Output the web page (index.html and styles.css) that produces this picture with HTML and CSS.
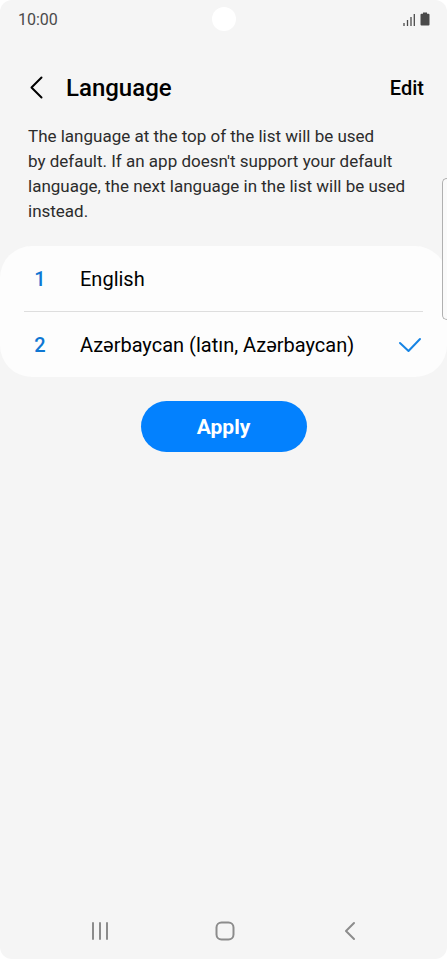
FILE: index.html
```html
<!DOCTYPE html>
<html lang="en">
<head>
<meta charset="utf-8">
<meta name="viewport" content="width=device-width, initial-scale=1">
<title>Language</title>
<link rel="stylesheet" href="styles.css">
</head>
<body>
<div class="screen">
  <div class="status">
    <time class="clock">10:00</time>
    <span class="camera"></span>
    <span class="status-icons">
      <svg width="12" height="13" viewBox="0 0 12 13" aria-hidden="true"><path d="M1 10v3M4.500 7v6M8 4v9M11.300 1v12"/></svg>
      <svg width="10" height="14" viewBox="0 0 10 14" aria-hidden="true"><path class="solid" d="M3 .5h4v1.300h1.500q1 0 1 1v9.700q0 1-1 1h-7q-1 0-1-1V2.800q0-1 1-1H3z"/></svg>
    </span>
  </div>
  <header class="header">
    <button class="back" type="button" aria-label="Navigate up">
      <svg width="14" height="24" viewBox="0 0 14 24" aria-hidden="true"><path d="M12.500 1.500 2.500 11.500l10 10"/></svg>
    </button>
    <h1 class="title">Language</h1>
    <button class="edit" type="button">Edit</button>
  </header>
  <main class="content">
    <p class="note">The language at the top of the list will be used by&nbsp;default. If an app doesn't support your default language, the next language in the list will be used instead.</p>
    <ol class="languages">
      <li class="item"><button class="language" type="button"><span class="rank">1</span><span class="name">English</span></button></li>
      <li class="item"><button class="language" type="button" aria-pressed="true"><span class="rank">2</span><span class="name" lang="az">Azərbaycan (latın, Azərbaycan)</span>
        <svg class="check" width="24" height="16" viewBox="0 0 24 16" aria-hidden="true"><path d="m2 6 8.500 8L22 2"/></svg></button></li>
    </ol>
    <button class="apply" type="button">Apply</button>
  </main>
  <nav class="nav">
    <button class="nav-button" type="button" aria-label="Recents"><svg width="20" height="20" viewBox="0 0 20 20" aria-hidden="true"><path d="M3 2v16M10 2v16M17 2v16"/></svg></button>
    <button class="nav-button" type="button" aria-label="Home"><svg width="20" height="20" viewBox="0 0 20 20" aria-hidden="true"><rect x="1.500" y="1.500" width="17" height="17" rx="5"/></svg></button>
    <button class="nav-button" type="button" aria-label="Back"><svg width="20" height="20" viewBox="0 0 20 20" aria-hidden="true"><path d="M14 2 6 10l8 8"/></svg></button>
  </nav>
  <div class="edge-handle"></div>
</div>
</body>
</html>
```
FILE: styles.css
```css
* {
  box-sizing: border-box;
}

body {
  margin: 0;
  background: #fff;
  color: #000;
  font-family: Roboto, "Liberation Sans", sans-serif;
}

button {
  margin: 0;
  padding: 0;
  border: 0;
  background: none;
  color: inherit;
  font: inherit;
}

svg {
  display: block;
  flex: none;
  fill: none;
  stroke: currentColor;
  stroke-linecap: round;
  stroke-linejoin: round;
}

.screen {
  position: relative;
  display: flex;
  flex-direction: column;
  min-height: 100vh;
  overflow: hidden;
  border-radius: 12px;
  background: #f5f5f5;
}

.status {
  display: grid;
  grid-template-columns: 1fr auto 1fr;
  align-items: center;
  height: 38px;
  padding: 0 17px 0 18px;
  color: #4a4a4a;
}

.clock {
  font-size: 16px;
}

.camera {
  width: 24px;
  height: 24px;
  border-radius: 50%;
  background: #fff;
}

.status-icons {
  display: flex;
  justify-content: flex-end;
  align-items: center;
  gap: 5px;
  stroke-width: 1.3;
}

.status-icons svg {
  stroke-linecap: butt;
}

.solid {
  fill: currentColor;
  stroke: none;
}

.header {
  display: flex;
  align-items: center;
  height: 68px;
  margin-top: 16px;
  padding: 0 23px 0 29px;
  line-height: 32px;
  font-weight: 500;
}

.back {
  display: flex;
  width: 37px;
  stroke-width: 2;
}

.title {
  flex: 1;
  margin: 0;
  font-size: 24px;
  font-weight: 500;
}

.edit {
  font-size: 20px;
}

.content {
  flex: 1;
}

.note {
  margin: 2px 28px 22px;
  color: #2c2c2c;
  font-size: 17px;
  line-height: 25px;
}

.languages {
  margin: 0;
  padding: 0 24px;
  border-radius: 32px;
  background: #fdfdfd;
  list-style: none;
}

.item + .item {
  border-top: 1px solid #dedede;
}

.language {
  display: flex;
  align-items: center;
  width: 100%;
  height: 65px;
  text-align: left;
  font-size: 20px;
}

.rank {
  width: 32px;
  margin-right: 24px;
  color: #0f77d3;
  font-weight: 500;
  text-align: center;
}

.name {
  flex: 1;
}

.check {
  margin-right: 1px;
  color: #1684e4;
  stroke-width: 2;
}

.apply {
  display: block;
  width: 166px;
  height: 51px;
  margin: 24px auto;
  border-radius: 26px;
  background: #0381fe;
  color: #fff;
  font-size: 21px;
  font-weight: 700;
}

.nav {
  display: flex;
  justify-content: space-between;
  padding: 0 71px 4px 74px;
  color: #8c8c8c;
  stroke-width: 2;
}

.nav-button {
  display: grid;
  place-items: center;
  width: 52px;
  height: 48px;
}

.edge-handle {
  position: absolute;
  top: 178px;
  right: -1px;
  width: 6px;
  height: 142px;
  border: 1px solid #b0b0b0;
  border-right: 0;
  border-radius: 5px 0 0 5px;
  background: #fafafa;
}
```
